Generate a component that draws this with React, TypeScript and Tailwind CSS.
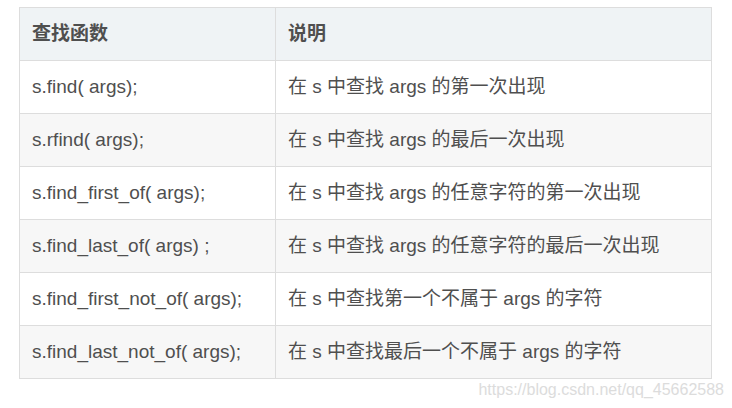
import React from 'react';

const rows: [string, string][] = [
  ['s.find( args);', '在 s 中查找 args 的第一次出现'],
  ['s.rfind( args);', '在 s 中查找 args 的最后一次出现'],
  ['s.find_first_of( args);', '在 s 中查找 args 的任意字符的第一次出现'],
  ['s.find_last_of( args) ;', '在 s 中查找 args 的任意字符的最后一次出现'],
  ['s.find_first_not_of( args);', '在 s 中查找第一个不属于 args 的字符'],
  ['s.find_last_not_of( args);', '在 s 中查找最后一个不属于 args 的字符'],
];

const App: React.FC = () => {
  return (
    <div
      className="w-[732px] h-[408px] bg-white pt-[7px] pl-[19px] text-[#4f4f4f] text-[19px]"
      style={{ fontFamily: '"Liberation Sans", Arial, "Noto Sans CJK SC", sans-serif' }}
    >
      <table className="w-[693px] border-collapse table-fixed">
        <colgroup>
          <col className="w-[256px]" />
          <col />
        </colgroup>
        <thead>
          <tr className="h-[53px] bg-[#eff3f5]">
            <th className="border border-[#dddddd] px-3 text-left font-bold">查找函数</th>
            <th className="border border-[#dddddd] px-3 text-left font-bold">说明</th>
          </tr>
        </thead>
        <tbody>
          {rows.map(([fn, desc], i) => (
            <tr key={i} className={i % 2 === 1 ? 'h-[53px] bg-[#f7f7f7]' : 'h-[53px] bg-white'}>
              <td className="border border-[#dddddd] px-3">{fn}</td>
              <td className="border border-[#dddddd] px-3">{desc}</td>
            </tr>
          ))}
        </tbody>
      </table>
      <div className="flex justify-end pr-[8px] pt-[1px]">
        <span className="text-[16px] text-[#dcdcdc] leading-5">https://blog.csdn.net/qq_45662588</span>
      </div>
    </div>
  );
};

export default App;
